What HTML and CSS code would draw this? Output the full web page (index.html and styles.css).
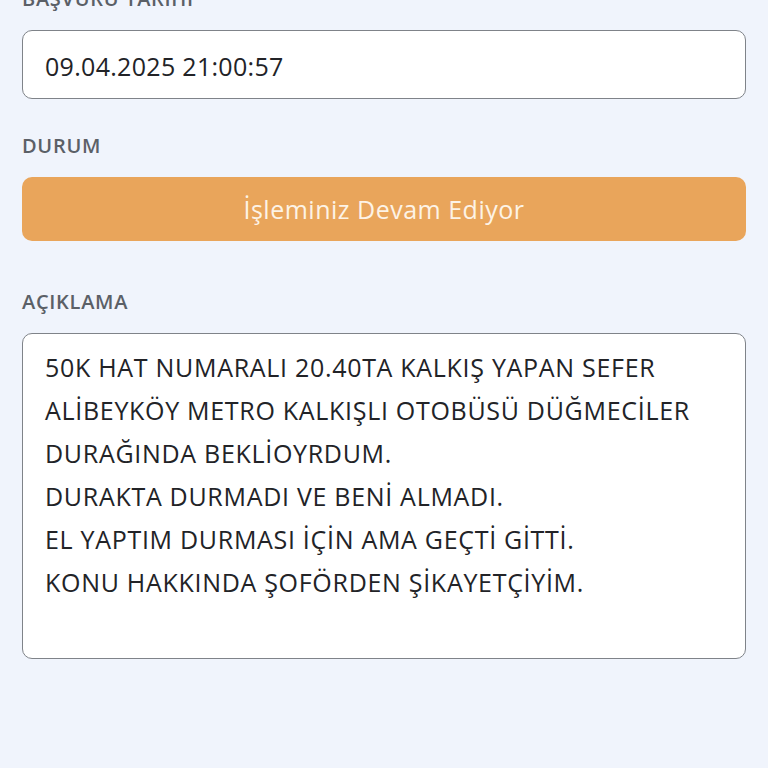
FILE: index.html
```html
<!DOCTYPE html>
<html lang="tr">
<head>
<meta charset="utf-8">
<link rel="stylesheet" href="styles.css">
</head>
<body>
<main class="page">
  <section class="field field-first">
    <div class="label">BAŞVURU TARİHİ</div>
    <div class="box box-input">09.04.2025 21:00:57</div>
  </section>
  <section class="field field-status">
    <div class="label">DURUM</div>
    <div class="status">İşleminiz Devam Ediyor</div>
  </section>
  <section class="field field-desc">
    <div class="label">AÇIKLAMA</div>
    <div class="box box-area">
      <div>50K HAT NUMARALI 20.40TA KALKIŞ YAPAN SEFER</div>
      <div>ALİBEYKÖY METRO KALKIŞLI OTOBÜSÜ DÜĞMECİLER</div>
      <div>DURAĞINDA BEKLİOYRDUM.</div>
      <div>DURAKTA DURMADI VE BENİ ALMADI.</div>
      <div>EL YAPTIM DURMASI İÇİN AMA GEÇTİ GİTTİ.</div>
      <div>KONU HAKKINDA ŞOFÖRDEN ŞİKAYETÇİYİM.</div>
    </div>
  </section>
</main>
</body>
</html>
```

FILE: styles.css
```css
* { box-sizing: border-box; }
html, body {
  margin: 0;
  padding: 0;
  background: #f0f4fc;
  height: 100%;
  overflow: hidden;
}
.page {
  padding: 0 22px;
  font-family: "Open Sans", "Noto Sans", sans-serif;
  color: #222327;
}
.field-first { margin-top: -13px; }
.field-status { margin-top: 35px; }
.field-desc { margin-top: 49px; }
.label {
  font-size: 20px;
  line-height: 24px;
  height: 24px;
  color: #5b6067;
  font-weight: 600;
  letter-spacing: 0.7px;
  margin-bottom: 19px;
}
.box {
  background: #ffffff;
  border: 1.5px solid #7f8389;
  border-radius: 10px;
}
.box-input {
  height: 69px;
  padding: 0 22px;
  display: flex;
  align-items: center;
  padding-top: 3px;
  font-size: 25px;
  letter-spacing: 0.3px;
}
.status {
  height: 64px;
  background: #e9a55b;
  border-radius: 10px;
  display: flex;
  align-items: center;
  justify-content: center;
  color: #fdf3e6;
  font-size: 25px;
  letter-spacing: 0.5px;
}
.box-area {
  height: 326px;
  padding: 12px 22px;
  font-size: 25px;
  line-height: 43px;
  letter-spacing: 0.7px;
}
```
